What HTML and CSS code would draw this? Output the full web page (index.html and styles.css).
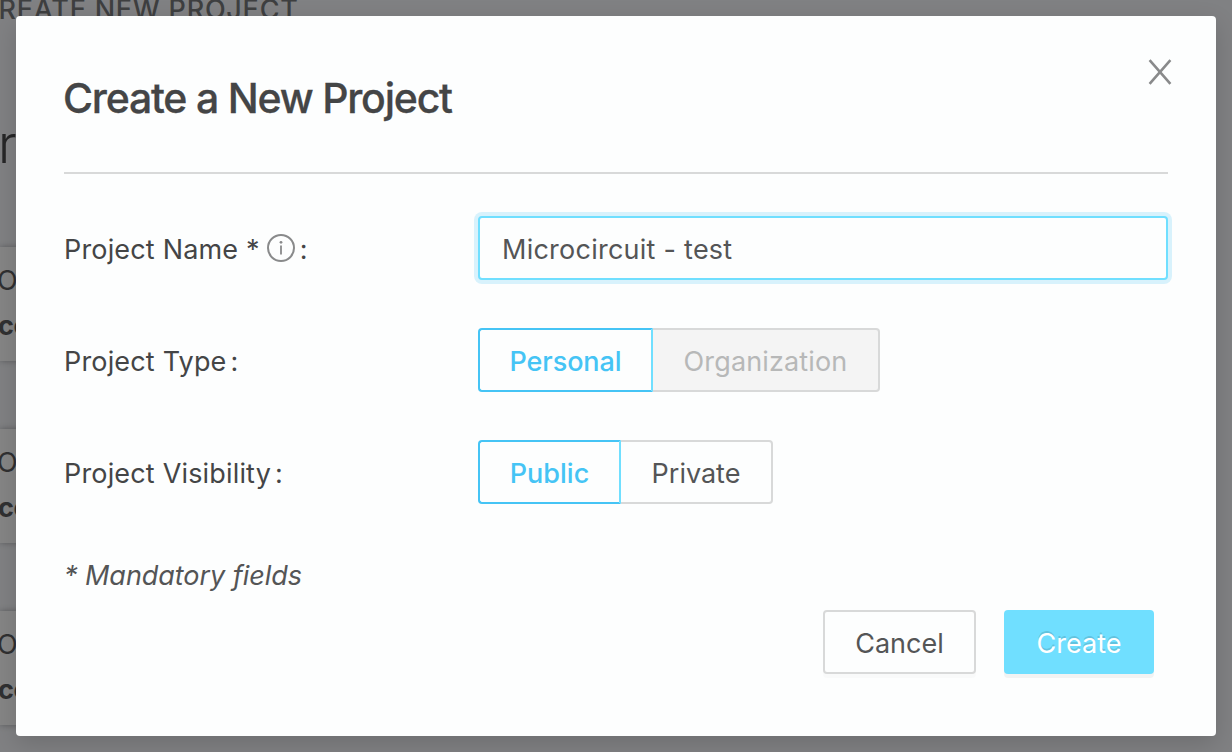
FILE: index.html
```
<!DOCTYPE html>
<html lang="en">
<head>
<meta charset="utf-8">
<title>Create a New Project</title>
<link rel="stylesheet" href="styles.css">
</head>
<body>
<div class="page">
  <div class="page-action">CREATE NEW PROJECT</div>
  <div class="page-heading">r</div>
  <div class="page-card"><span class="org">O</span><span class="name">co</span></div>
  <div class="page-card"><span class="org">O</span><span class="name">co</span></div>
  <div class="page-card"><span class="org">O</span><span class="name">co</span></div>
</div>
<div class="modal" role="dialog">
  <header class="modal-header">
    <h1 class="title">Create a New Project</h1>
    <svg class="close" viewBox="0 0 24 26"><path d="M1.6 1.2 22.4 24.8M22.4 1.2 1.6 24.8"/></svg>
  </header>
  <form class="form">
    <div class="row">
      <div class="label"><span class="text">Project Name *</span>
        <svg class="info" viewBox="0 0 28 28"><circle cx="14" cy="14" r="13"/><path class="stem" d="M14 11.5V20.5"/><circle class="dot" cx="14" cy="8.3" r="1.4"/></svg><span class="text">:</span></div>
      <input class="input" type="text" value="Microcircuit - test">
    </div>
    <div class="row">
      <div class="label"><span class="text">Project Type</span><span class="text colon">:</span></div>
      <div class="group"><span class="option selected personal">Personal</span><span class="option disabled">Organization</span></div>
    </div>
    <div class="row">
      <div class="label"><span class="text">Project Visibility</span><span class="text colon">:</span></div>
      <div class="group"><span class="option selected public">Public</span><span class="option private">Private</span></div>
    </div>
    <div class="note">* Mandatory fields</div>
    <div class="actions"><button class="btn cancel" type="button">Cancel</button><button class="btn create" type="button">Create</button></div>
  </form>
</div>
</body>
</html>
```
FILE: styles.css
```
* { box-sizing: border-box; }
body {
  margin: 0;
  width: 1232px;
  height: 752px;
  overflow: hidden;
  position: relative;
  background: #808183;
  font-family: Inter, "Liberation Sans", sans-serif;
  font-size: 27px;
  line-height: 34px;
  color: #545556;
}
.page { height: 752px; overflow: hidden; }
.page-action {
  height: 26px;
  margin: -7px 0 0 -22px;
  font-weight: 500;
  letter-spacing: .74px;
  color: #3e3f40;
  white-space: nowrap;
}
.page-heading {
  height: 64px;
  margin: 94px 0 70px -2px;
  font-size: 52px;
  line-height: 64px;
  font-weight: 300;
  color: #262627;
}
.page-card {
  width: 300px;
  height: 114px;
  margin-bottom: 68px;
  padding-top: 17px;
  background: #858585;
  box-shadow: 0 0 6px rgba(0, 0, 0, .3);
  color: #303031;
  display: flex;
  flex-direction: column;
  gap: 11px;
}
.org { margin-left: -3px; }
.name { margin-left: -2px; font-weight: 700; letter-spacing: -.5px; }
.modal {
  position: absolute;
  left: 16px;
  top: 16px;
  width: 1200px;
  height: 720px;
  padding: 0 48px;
  background: #fdfefe;
  border-radius: 4px;
  box-shadow: 0 8px 24px rgba(0, 0, 0, .15);
}
.modal-header {
  display: flex;
  justify-content: space-between;
  align-items: flex-start;
  height: 158px;
  border-bottom: 2px solid #d8d9d9;
}
.title {
  margin: 56px 0 0 -1px;
  font-size: 41px;
  line-height: 52px;
  font-weight: 500;
  letter-spacing: -1.22px;
  color: #444546;
  -webkit-text-stroke: .3px #444546;
}
.close { width: 24px; height: 26px; margin: 43px -4px 0 0; fill: none; stroke: #898a8b; stroke-width: 2.6; }
.form { padding-top: 42px; }
.row { display: flex; height: 64px; margin-bottom: 48px; }
.label { display: flex; align-items: center; width: 414px; color: #444546; }
.text { padding-top: 4px; letter-spacing: .17px; }
.info { width: 28px; height: 28px; margin: 0 5px 0 7px; fill: none; stroke: #898a8b; stroke-width: 2; }
.info .stem { stroke-width: 1.8; }
.info .dot { fill: #898a8b; stroke: none; }
.colon { margin-left: 4px; }
.input {
  width: 690px;
  height: 64px;
  padding: 2px 22px 0;
  border: 2px solid #70dfff;
  border-radius: 4px;
  outline: none;
  box-shadow: 0 0 0 4px #d8f2fc;
  background: #fdfefe;
  color: #545556;
  font: inherit;
  letter-spacing: .25px;
}
.group { display: flex; }
.option {
  display: flex;
  align-items: center;
  justify-content: center;
  padding-top: 4px;
  border: 2px solid #d8d9d9;
  border-left: 0;
  border-radius: 0 4px 4px 0;
}
.selected {
  border: 2px solid #45c4f5;
  border-right-color: #70dfff;
  border-radius: 4px 0 0 4px;
  color: #45c4f5;
  font-weight: 500;
}
.personal { width: 175px; letter-spacing: -.1px; }
.disabled { width: 227px; background: #f4f4f4; color: #b7b8b8; letter-spacing: .15px; }
.public { width: 143px; }
.private { width: 152px; }
.note { height: 41px; padding-top: 7px; font-style: italic; letter-spacing: -.05px; }
.actions { display: flex; justify-content: flex-end; gap: 28px; margin: 17px 14px 0 0; }
.btn { height: 64px; padding: 4px 0 0; border-radius: 4px; font: inherit; }
.cancel { width: 153px; border: 2px solid #d8d9d9; background: #fdfefe; color: #545556; box-shadow: 0 4px 0 rgba(0, 0, 0, .015); }
.create { width: 150px; border: 0; background: #70dfff; color: #fff; text-shadow: 0 -2px 0 rgba(0, 0, 0, .12); box-shadow: 0 4px 0 rgba(0, 0, 0, .045); }
```
